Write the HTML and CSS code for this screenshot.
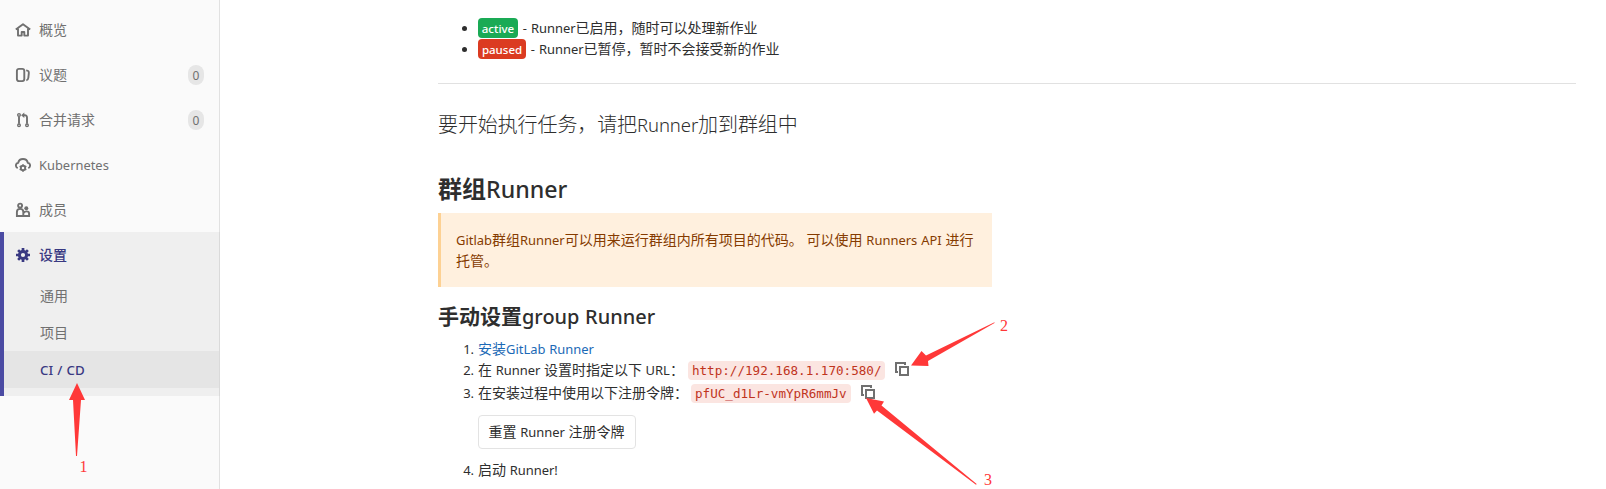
FILE: index.html
```html
<!DOCTYPE html>
<html lang="zh-CN">
<head>
<meta charset="utf-8">
<title>CI / CD</title>
<link rel="stylesheet" href="styles.css">
</head>
<body>
<div class="page">
  <nav class="sidebar">
    <a class="nav-item"><svg class="icon" viewBox="0 0 16 16"><path d="M.8 7.600 8 2.200l7.200 5.400M3 6.800V13.600h3.700V10h2.600v3.600H13V6.800" fill="none" stroke="currentColor" stroke-width="1.900" stroke-linejoin="round"/></svg><span class="label">概览</span></a>
    <a class="nav-item"><svg class="icon" viewBox="0 0 16 16"><rect x="1.900" y="1.900" width="7.400" height="12.200" rx="2" fill="none" stroke="currentColor" stroke-width="1.900"/><path d="M11.200 3.400c2.400.2 2.800 1 2.600 3L13.300 11c-.2 1.600-.7 2.200-2 2.400" fill="none" stroke="currentColor" stroke-width="1.900"/></svg><span class="label">议题</span><span class="count">0</span></a>
    <a class="nav-item"><svg class="icon" viewBox="0 0 16 16"><g fill="none" stroke="currentColor" stroke-width="1.400"><circle cx="4" cy="2.900" r="1.300"/><circle cx="4" cy="13.300" r="1.300"/><circle cx="12" cy="13.300" r="1.300"/><path d="M4 4.500v7.200M12 11.700V5.500C12 4 11.300 3.300 9.800 3.300H8" stroke-width="1.900"/></g><path d="M9.300.5v5.600L6.100 3.300z" fill="currentColor"/></svg><span class="label">合并请求</span><span class="count">0</span></a>
    <a class="nav-item"><svg class="icon" viewBox="0 0 16 16"><path d="M2.700 11.200C1.300 10.500.9 9.500.9 8.400c0-1.500 1-2.500 2.300-2.700C3.700 3.500 5.500 2 8 2s4.300 1.500 4.800 3.700c1.300.2 2.300 1.200 2.300 2.700 0 1.100-.4 2.100-1.800 2.800" fill="none" stroke="currentColor" stroke-width="1.900"/><circle cx="8" cy="11" r="2.200" fill="none" stroke="currentColor" stroke-width="1.900"/><path d="M8 7.200v1.500M8 13.300v1.500M4.700 9.100l1.300.8M10 12.100l1.300.8M11.300 9.100l-1.300.8M6 12.100l-1.300.8" stroke="currentColor" stroke-width="1.600"/></svg><span class="label en">Kubernetes</span></a>
    <a class="nav-item"><svg class="icon" viewBox="0 0 16 16"><g fill="none" stroke="currentColor" stroke-width="1.900"><circle cx="5.100" cy="3.600" r="2"/><path d="M1.900 14V10C1.900 8 3 6.900 5.100 6.900S8.300 8 8.300 10v4zM8.800 14h5.300v-2.300c0-1.500-.9-2.300-2.600-2.300-1.400 0-2.300.6-2.600 1.700"/></g><circle cx="11.300" cy="6.300" r="2" fill="currentColor"/></svg><span class="label">成员</span></a>
    <div class="group">
      <a class="nav-item current"><svg class="icon" viewBox="0 0 16 16"><circle cx="8" cy="8" r="3.600" fill="none" stroke="currentColor" stroke-width="3"/><path d="M8 1v3M8 12v3M1 8h3M12 8h3M3.100 3.100l2 2M10.900 10.900l2 2M12.900 3.100l-2 2M5.100 10.900l-2 2" stroke="currentColor" stroke-width="2.700"/></svg><span class="label">设置</span></a>
      <a class="sub">通用</a>
      <a class="sub">项目</a>
      <a class="sub chosen"><span class="en">CI / CD</span></a>
    </div>
  </nav>

  <main class="content">
    <ul class="states">
      <li><span class="badge green">active</span><span class="en"> - Runner</span>已启用，随时可以处理新作业</li>
      <li><span class="badge red">paused</span><span class="en"> - Runner</span>已暂停，暂时不会接受新的作业</li>
    </ul>
    <h4 class="intro">要开始执行任务，请把<span class="en">Runner</span>加到群组中</h4>
    <h2 class="title">群组<span class="en">Runner</span></h2>
    <div class="notice"><span class="en">Gitlab</span>群组<span class="en">Runner</span>可以用来运行群组内所有项目的代码。 可以使用 <span class="en">Runners API</span> 进行托管。</div>
    <h3 class="subtitle">手动设置<span class="en">group Runner</span></h3>
    <ol class="steps">
      <li><a class="link">安装<span class="en">GitLab Runner</span></a></li>
      <li>在 <span class="en">Runner</span> 设置时指定以下 <span class="en">URL</span>：<code class="url">http://192.168.1.170:580/</code><svg class="copy" viewBox="0 0 14 14"><path d="M3 10H1V1h9v2M5 5h8v8H5z"/></svg></li>
      <li class="token-step">在安装过程中使用以下注册令牌：<code class="token">pfUC_d1Lr-vmYpR6mmJv</code><svg class="copy" viewBox="0 0 14 14"><path d="M3 10H1V1h9v2M5 5h8v8H5z"/></svg>
        <div><button class="reset">重置 <span class="en">Runner</span> 注册令牌</button></div></li>
      <li>启动 <span class="en">Runner!</span></li>
    </ol>
  </main>
</div>
<svg class="annotations" viewBox="0 0 1606 489">
  <path d="M77 383l8 17h-4l-4 56h-1l-3-56h-4z"/>
  <path d="M911 365.500 921.500 351l4.500 4.500 68.500-33.200v.7L928 361l.5 5z"/>
  <path d="M866 398l18 3.500-2.500 4L976.700 484l-.7.700L877 410.500l-3 3.200z"/>
  <text x="79.500" y="472">1</text>
  <text x="1000" y="331">2</text>
  <text x="984" y="485">3</text>
</svg>
</body>
</html>
```
FILE: styles.css
```css
* { box-sizing: border-box; }
body {
  margin: 0;
  background: #fff;
  color: #2e2e2e;
  font: 14px/21px "Noto Sans CJK SC", "Noto Sans", sans-serif;
  word-spacing: 0.500px;
  overflow: hidden;
}
.page { display: flex; height: 489px; }
.en { font-family: "Noto Sans", sans-serif; font-size: 0.925em; line-height: 1; white-space: pre-wrap; }

/* Sidebar */
.sidebar {
  flex: 0 0 220px;
  padding-top: 7px;
  background: #fafafa;
  border-right: 1px solid #e1e1e1;
  color: #707070;
}
.nav-item { display: flex; align-items: center; height: 45px; padding: 0 15px; }
.icon { width: 16px; height: 16px; margin-right: 8px; }
.label.en { font-size: 12.900px; padding-top: 1px; }
.count {
  margin-left: auto;
  width: 16px;
  height: 20px;
  border-radius: 8px;
  background: #e6e6e6;
  font: 12px/21px "Noto Sans", sans-serif;
  text-align: center;
}
.group {
  height: 164px;
  border-left: 4px solid #4b4ba3;
  background: #efefef;
  margin-right: -1px;
  border-right: 1px solid #dadada;
}
.current { padding-left: 11px; color: #393982; font-weight: 500; }
.sub { display: block; height: 37px; padding-left: 36px; line-height: 36px; }
.chosen { background: #e5e5e5; color: #393982; font-weight: 500; word-spacing: 0.700px; }
.chosen .en { font-size: 13.300px; }

/* Content */
.content { flex: 1; padding: 17px 30px 0 218px; }
ul, ol { margin: 0; padding-left: 40px; }
li::marker { font-family: "Noto Sans", sans-serif; font-size: 13px; }
.states { height: 67px; border-bottom: 1px solid #e1e1e1; }
.states li { height: 21px; }
.badge {
  display: inline-block;
  height: 20px;
  margin-top: 1px;
  border-radius: 4px;
  color: #fff;
  font: 500 11.500px/21px "Noto Sans", sans-serif;
  text-align: center;
  vertical-align: top;
}
.badge + .en { margin-left: 1px; }
.green { background: #1aaa55; width: 40px; }
.red { background: #db3b21; width: 48px; }
.intro { margin: 28px 0 0; font-size: 20px; line-height: 24px; font-weight: 300; letter-spacing: -0.100px; }
.title { margin: 37px 0 0; font-size: 24px; line-height: 30px; font-weight: 700; }
.title .en, .subtitle .en { font-weight: 500; font-size: 0.950em; }
.title .en { font-size: 0.965em; }
.notice {
  width: 554px;
  height: 74px;
  margin-top: 10px;
  padding: 16px 15px;
  border-left: 3px solid #fdd193;
  background: #fff0de;
  color: #853b00;
  word-spacing: 0.700px;
}
.subtitle { margin: 14px 0 0; font-size: 21px; line-height: 28px; font-weight: 700; }
.steps { margin-top: 9px; }
.steps li { height: 21px; white-space: nowrap; }
.steps .token-step { height: 79px; padding-top: 2px; }
.link { color: #1b69b6; }
code {
  display: inline-block;
  height: 19px;
  padding: 0 4px;
  border-radius: 4px;
  background: #fbe5e1;
  color: #c0341d;
  font: 12.600px/19px "DejaVu Sans Mono", monospace;
  vertical-align: top;
  margin-top: 2px;
}
.url { margin-left: 4px; }
.token { margin-left: 3px; }
.copy {
  width: 14px;
  height: 14px;
  margin: 3px 0 0 10px;
  vertical-align: top;
  fill: none;
  stroke: #707070;
  stroke-width: 2;
}
.reset {
  display: block;
  width: 158px;
  height: 34px;
  margin-top: 12px;
  padding: 0 1px 2px 0;
  border: 1px solid #e3e3e3;
  border-radius: 4px;
  background: #fff;
  color: #2e2e2e;
  font: inherit;
  word-spacing: inherit;
}

/* Numbered arrows drawn over the page */
.annotations {
  position: absolute;
  inset: 0;
  width: 1606px;
  height: 489px;
  pointer-events: none;
  fill: #ff3838;
  font: 16px "Liberation Serif", serif;
}
```
